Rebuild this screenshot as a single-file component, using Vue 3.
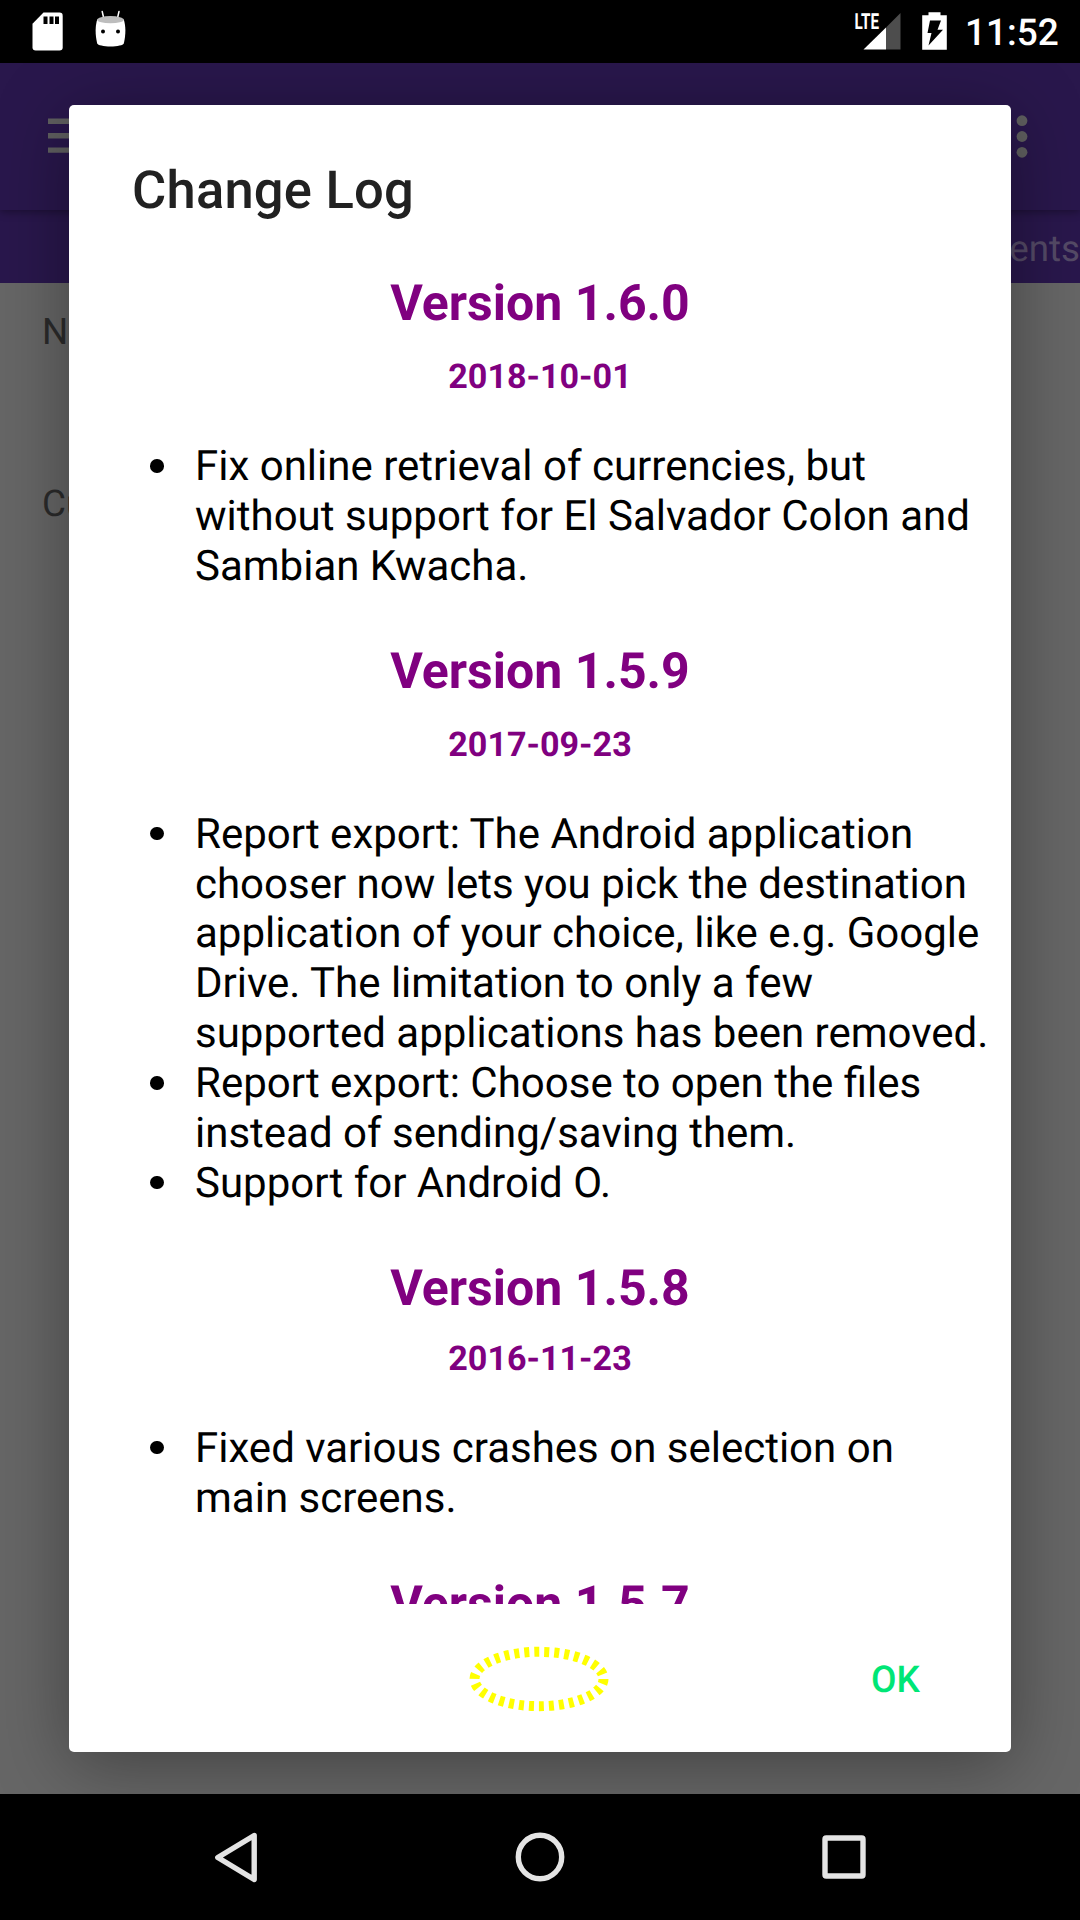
<script setup>
const releases = [
  {
    version: 'Version 1.6.0',
    date: '2018-10-01',
    items: [
      ['Fix online retrieval of currencies, but', 'without support for El Salvador Colon and', 'Sambian Kwacha.'],
    ],
  },
  {
    version: 'Version 1.5.9',
    date: '2017-09-23',
    items: [
      [
        'Report export: The Android application',
        'chooser now lets you pick the destination',
        'application of your choice, like e.g. Google',
        'Drive. The limitation to only a few',
        'supported applications has been removed.',
      ],
      ['Report export: Choose to open the files', 'instead of sending/saving them.'],
      ['Support for Android O.'],
    ],
  },
  {
    version: 'Version 1.5.8',
    date: '2016-11-23',
    items: [['Fixed various crashes on selection on', 'main screens.']],
  },
  { version: 'Version 1.5.7', date: '', items: [] },
]
</script>

<template>
  <div class="screen">
    <header class="status">
      <svg class="status-left" width="140" height="63" viewBox="0 0 140 63">
        <path fill="#fff" d="M43.5 12.5H59.5a3.2 3.2 0 0 1 3.2 3.2V47.3a3.2 3.2 0 0 1-3.2 3.2H35.7a3.2 3.2 0 0 1-3.2-3.2V23.8Z" />
        <path fill="#000" d="M43.5 16.5h4v7.5h-4zM49.5 16.5h4v7.5h-4zM55 16.5h4v7.5h-4z" />
        <path fill="none" stroke="#fff" stroke-width="1.5" stroke-linecap="round" d="M102.2 11.5l1.6 7M119 11.5l-1.6 7" />
        <path fill="#fff" d="M97.2 19.5C95.2 26 95 34 97.2 43.5c.5 1.6 6.5 3 13.3 3s12.8-1.4 13.3-3C126 34 125.8 26 123.8 19.5Z" />
        <ellipse cx="110.5" cy="19.7" rx="13.3" ry="3.6" fill="#bdbdbd" />
        <circle cx="103" cy="31.5" r="2" /><circle cx="118" cy="31.5" r="2" />
      </svg>
      <svg class="status-right" width="102" height="63" viewBox="850 0 102 63">
        <path fill="#4d4d4d" d="M900.5 13v36.5H886V27.5Z" />
        <path fill="#fff" d="M886 27.5V49.5H863.5Z" />
        <text class="lte" x="854.5" y="29.3" textLength="24.5" lengthAdjust="spacingAndGlyphs">LTE</text>
        <path fill="#fff" d="M928.5 12.3h12v3h6.3v34.4h-24.6V15.3h6.3Z" />
        <path fill="#000" d="M930 20.5h11l-3.5 9.3h5.5L928.5 45.5l3-12.5h-4Z" />
      </svg>
      <span class="clock">11:52</span>
    </header>

    <main class="app">
      <div class="toolbar">
        <svg class="menu" width="48" height="36" viewBox="0 0 48 36"><path fill="#606060" d="M0 .6h48v5.3H0zM0 15.1h48v5.3H0zM0 29.5h48v5.3H0z" /></svg>
        <svg class="more" width="12" height="46" viewBox="0 0 12 46" fill="#606060"><circle cx="6" cy="6.7" r="5.4" /><circle cx="6" cy="22.5" r="5.4" /><circle cx="6" cy="38.3" r="5.4" /></svg>
      </div>
      <div class="tabs">Recurring Payments</div>
      <div class="page">
        <p>Name</p>
        <p>Currency</p>
      </div>
      <section class="dialog">
        <h1>Change Log</h1>
        <div class="log">
          <article v-for="r in releases" :key="r.version">
            <h2>{{ r.version }}</h2>
            <h3>{{ r.date }}</h3>
            <ul v-if="r.items.length">
              <li v-for="(item, i) in r.items" :key="i">
                <span v-for="line in item" :key="line">{{ line }}</span>
              </li>
            </ul>
          </article>
        </div>
        <footer>
          <svg class="ring" width="144" height="70" viewBox="0 0 144 70">
            <ellipse cx="72" cy="35" rx="64.5" ry="27.2" fill="none" stroke="#ff0" stroke-width="10" stroke-dasharray="5" />
          </svg>
          <span class="ok">OK</span>
        </footer>
      </section>
    </main>

    <nav>
      <svg width="1080" height="126" viewBox="0 0 1080 126" fill="none" stroke="#e4e4e4" stroke-width="5.4" stroke-linejoin="round">
        <path d="M254.2 41.5L217.8 63.5L254.2 85.5Z" />
        <circle cx="540" cy="63" r="21.7" />
        <rect x="825" y="44" width="38" height="38" rx="1.2" />
      </svg>
    </nav>
  </div>
</template>

<style>
body {
  margin: 0;
}
</style>

<style scoped>
.screen {
  width: 1080px;
  height: 1920px;
  display: flex;
  flex-direction: column;
  overflow: hidden;
  background: #000;
  font-family: Roboto, "Liberation Sans", sans-serif;
  text-rendering: geometricPrecision;
}
.status {
  height: 63px;
  display: flex;
  background: #000;
}
.status-right {
  margin-left: 710px;
}
.lte {
  font-size: 22px;
  font-weight: 700;
  fill: #fff;
}
.clock {
  margin-left: 13px;
  font-size: 37px;
  font-weight: 500;
  line-height: 68px;
  color: #fff;
}
.app {
  position: relative;
  height: 1731px;
  overflow: hidden;
  background: #666;
}
.toolbar {
  position: relative;
  z-index: 1;
  height: 147px;
  box-sizing: border-box;
  padding: 51px 52px 0 48px;
  display: flex;
  justify-content: space-between;
  background: #29174c;
  box-shadow: 0 2px 8px rgba(0, 0, 0, 0.35);
}
.menu {
  margin-top: 4px;
}
.tabs {
  height: 73px;
  overflow: hidden;
  text-align: right;
  font-size: 36.75px;
  line-height: 77px;
  background: #29174c;
  color: #544a66;
}
.page {
  padding: 24px 42px;
  font-size: 36.75px;
  line-height: 50px;
  color: #2b2b2b;
}
.page p {
  margin: 0 0 122px;
}
.dialog {
  position: absolute;
  z-index: 2;
  left: 69px;
  top: 42px;
  width: 942px;
  height: 1647px;
  box-sizing: border-box;
  display: flex;
  flex-direction: column;
  border-radius: 5px;
  background: #fff;
  box-shadow: 0 12px 72px rgba(0, 0, 0, 0.36);
}
h1 {
  margin: 54px 0 0 63px;
  height: 105px;
  font-size: 52.5px;
  font-weight: 500;
  line-height: 62px;
  letter-spacing: 0.22px;
  color: #212121;
}
.log {
  margin: 0 21px 0 63px;
  height: 1340px;
  overflow: hidden;
  color: #000;
}
article {
  margin-bottom: 40px;
}
h2,
h3 {
  margin: 0 42px 0 0;
  text-align: center;
  font-weight: 700;
  color: #800080;
}
h2 {
  font-size: 50px;
  line-height: 80px;
}
h3 {
  margin-top: 3px;
  font-size: 34.125px;
  line-height: 60px;
}
article:nth-child(3) {
  margin-bottom: 42px;
}
article:nth-child(3) h3 {
  margin-top: 0;
}
ul {
  margin: 35px 0 0;
  padding: 0 0 0 63px;
  list-style: none;
  font-size: 42px;
  line-height: 49.875px;
}
li {
  position: relative;
}
li::before {
  content: "";
  position: absolute;
  left: -45px;
  top: 17px;
  width: 13.5px;
  height: 13.5px;
  border-radius: 50%;
  background: #000;
}
li span {
  display: block;
  white-space: nowrap;
}
footer {
  display: flex;
  align-items: center;
  height: 148px;
  padding-top: 2px;
  box-sizing: border-box;
}
.ring {
  margin-left: 398px;
}
.ok {
  margin: 2px 0 0 260px;
  font-size: 37px;
  font-weight: 500;
  color: #00e676;
}
nav {
  height: 126px;
  background: #000;
}
nav svg {
  display: block;
}
</style>
